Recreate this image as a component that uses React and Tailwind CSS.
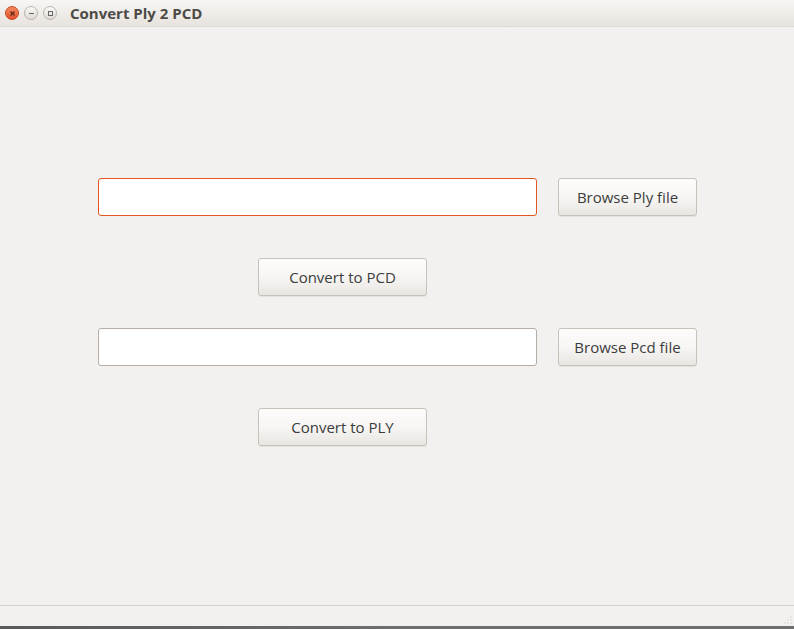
import React from 'react';

/**
 * Convert Ply 2 PCD — ventana de escritorio (estilo Ubuntu/Ambiance)
 */
const WinButton = ({ children, close }) => (
    <div
        className={
            close
                ? "w-[14px] h-[14px] rounded-full bg-gradient-to-b from-[#f58a5f] to-[#e0502a] border border-[#c44a22] flex items-center justify-center"
                : "w-[14px] h-[14px] rounded-full bg-gradient-to-b from-[#fbfaf8] to-[#dedad5] border border-[#b9b4ad] flex items-center justify-center"
        }
    >
        {children}
    </div>
);

const PushButton = ({ label, width }) => (
    <button
        type="button"
        className={`${width} h-[38px] shrink-0 rounded-[3px] border border-[#c7c1b9] bg-gradient-to-b from-[#fdfcfb] via-[#f7f6f4] to-[#e9e6e1] text-[15px] text-[#3c3c3c] shadow-[0_1px_0_rgba(0,0,0,0.06)]`}
    >
        {label}
    </button>
);

export default function App() {
    return (
        <div
            className="w-[794px] h-[629px] flex flex-col bg-[#f2f1f0] overflow-hidden"
            style={{ fontFamily: '"Open Sans", "DejaVu Sans", sans-serif' }}
        >
            {/* Barra de título */}
            <div className="h-[27px] shrink-0 flex items-center bg-gradient-to-b from-[#f7f6f4] to-[#e7e3de] border-b border-[#dcd8d2]">
                <div className="flex items-center gap-[5px] pl-[5px]">
                    <WinButton close>
                        <svg width="7" height="7" viewBox="0 0 7 7">
                            <path d="M1.5 1.5L5.5 5.5M5.5 1.5L1.5 5.5" stroke="#5a2a18" strokeWidth="1.2" />
                        </svg>
                    </WinButton>
                    <WinButton>
                        <svg width="7" height="7" viewBox="0 0 7 7">
                            <path d="M1 3.5H6" stroke="#666" strokeWidth="1" />
                        </svg>
                    </WinButton>
                    <WinButton>
                        <svg width="7" height="7" viewBox="0 0 7 7">
                            <rect x="1.5" y="1.5" width="4" height="4" fill="none" stroke="#666" strokeWidth="1" />
                        </svg>
                    </WinButton>
                </div>
                <span className="ml-[13px] text-[15px] font-bold text-[#4c4a47]">Convert Ply 2 PCD</span>
            </div>

            {/* Contenido */}
            <div className="flex-1 flex flex-col">
                <div className="mt-[151px] flex pl-[98px]">
                    <div className="w-[439px] h-[38px] rounded-[3px] border border-[#e3561f] bg-white" />
                    <div className="ml-[21px]">
                        <PushButton label="Browse Ply file" width="w-[139px]" />
                    </div>
                </div>
                <div className="mt-[42px] flex pl-[258px]">
                    <PushButton label="Convert to PCD" width="w-[169px]" />
                </div>
                <div className="mt-[32px] flex pl-[98px]">
                    <div className="w-[439px] h-[38px] rounded-[3px] border border-[#b5aea6] bg-white" />
                    <div className="ml-[21px]">
                        <PushButton label="Browse Pcd file" width="w-[139px]" />
                    </div>
                </div>
                <div className="mt-[42px] flex pl-[258px]">
                    <PushButton label="Convert to PLY" width="w-[169px]" />
                </div>
            </div>

            {/* Barra de estado */}
            <div className="h-[21px] shrink-0 border-t border-[#d6d2cc] bg-[#f2f1f0] flex justify-end items-end pr-[2px] pb-[2px]">
                <svg width="8" height="8" viewBox="0 0 8 8">
                    <circle cx="7" cy="1" r="0.7" fill="#d0ccc6" />
                    <circle cx="4" cy="4" r="0.7" fill="#d0ccc6" />
                    <circle cx="7" cy="4" r="0.7" fill="#d0ccc6" />
                    <circle cx="1" cy="7" r="0.7" fill="#d0ccc6" />
                    <circle cx="4" cy="7" r="0.7" fill="#d0ccc6" />
                    <circle cx="7" cy="7" r="0.7" fill="#d0ccc6" />
                </svg>
            </div>
            <div className="h-[3px] shrink-0 bg-gradient-to-r from-[#5a5a5a] via-[#6e6e6e] to-[#6e6e6e]" />
        </div>
    );
}
